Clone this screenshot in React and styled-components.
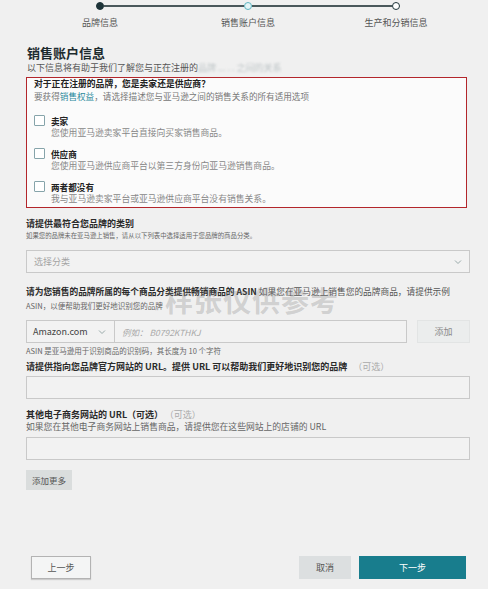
import React from 'react';
import styled, { createGlobalStyle } from 'styled-components';

const GlobalStyle = createGlobalStyle`
  html, body {
    margin: 0;
    padding: 0;
    background: #f0f0f0;
  }
  body {
    font-family: "Noto Sans CJK SC", "Noto Sans", "Liberation Sans", sans-serif;
    color: #333;
  }
  * { box-sizing: border-box; }
`;

const Page = styled.div`
  position: relative;
  width: 488px;
  height: 589px;
  padding: 1px 18px 0 26px;
  overflow: hidden;
`;

const Stepper = styled.div`
  display: flex;
  flex-direction: column;
`;

const Track = styled.div`
  display: flex;
  align-items: center;
  padding: 0 70px;
  height: 10px;
`;

const Dot = styled.span`
  width: 8px;
  height: 8px;
  border-radius: 50%;
  flex: none;
  border: 1.5px solid ${(p) => (p.$state === 'current' ? '#5fb5c1' : '#1d3338')};
  background: ${(p) => {
    if (p.$state === 'done') return '#1d3338';
    if (p.$state === 'current') return '#e4f4f6';
    return '#fff';
  }};
`;

const Line = styled.span`
  flex: 1;
  height: 1.5px;
  background: #4a585b;
`;

const StepLabels = styled.div`
  display: grid;
  grid-template-columns: repeat(3, 1fr);
  margin-top: 5px;
`;

const StepLabel = styled.span`
  text-align: center;
  font-size: 9px;
  color: #555;
  line-height: 14px;
`;

const Title = styled.h1`
  margin: 14px 0 0 1px;
  font-size: 13px;
  font-weight: 700;
  color: #1d2b2e;
  line-height: 18px;
`;

const Subtitle = styled.p`
  margin: 0 0 0 1px;
  font-size: 9px;
  color: #555;
  line-height: 12px;
`;

const Blur = styled.span`
  color: #bfc6c8;
  filter: blur(1px);
`;

const QuestionBox = styled.div`
  margin: 3px 3px 0 0;
  border: 1.5px solid #b3262b;
  background: #fbfbfb;
  padding: 0 7px 2px 7px;
`;

const QuestionTitle = styled.div`
  font-size: 8.8px;
  font-weight: 700;
  color: #222;
  line-height: 12px;
`;

const Hint = styled.div`
  font-size: 8.6px;
  color: #777;
  line-height: 12px;
`;

const Link = styled.span`
  color: #2a8a9c;
`;

const OptionList = styled.div`
  display: flex;
  flex-direction: column;
  gap: 9px;
  margin-top: 13px;
`;

const Option = styled.label`
  display: flex;
  gap: 6px;
  align-items: flex-start;
`;

const Box = styled.span`
  width: 11px;
  height: 11px;
  flex: none;
  border: 1px solid #86a4aa;
  background: #fff;
  border-radius: 1px;
`;

const OptionText = styled.div`
  display: flex;
  flex-direction: column;
`;

const OptionName = styled.span`
  font-size: 8.6px;
  font-weight: 700;
  color: #222;
  line-height: 12px;
`;

const OptionDesc = styled.span`
  font-size: 8.8px;
  color: #888;
  line-height: 12px;
`;

const Section = styled.div`
  margin-top: ${(p) => p.$top || 10}px;
`;

const Label = styled.div`
  font-size: ${(p) => p.$size || 9}px;
  font-weight: 700;
  color: #2a2a2a;
  line-height: 12px;
`;

const Normal = styled.span`
  font-weight: 400;
  color: #555;
`;

const Optional = styled.span`
  font-weight: 400;
  color: #aaa;
  margin-left: 6px;
`;

const Desc = styled.div`
  font-size: ${(p) => p.$size || 7}px;
  color: #666;
  line-height: ${(p) => p.$lh || 12}px;
`;

const Field = styled.div`
  height: 23px;
  border: 1px solid #c9c9c9;
  background: #f2f2f2;
  display: flex;
  align-items: center;
  padding: 0 7px;
  margin-top: ${(p) => p.$top || 0}px;
`;

const SelectField = styled(Field)`
  justify-content: space-between;
  font-size: 9px;
  color: #a4a4a4;
`;

const Chevron = () => (
  <svg width="8" height="6" viewBox="0 0 8 6">
    <path d="M1 1.5 L4 4.5 L7 1.5" fill="none" stroke="#9aa" strokeWidth="1" />
  </svg>
);

const AsinRow = styled.div`
  display: flex;
  gap: 10px;
  margin: 7px 0 2px;
`;

const AsinGroup = styled.div`
  flex: 1;
  display: flex;
  height: 23px;
  border: 1px solid #c9c9c9;
  background: #f2f2f2;
`;

const Market = styled.div`
  width: 88px;
  display: flex;
  align-items: center;
  justify-content: space-between;
  padding: 0 8px 0 6px;
  border-right: 1px solid #c9c9c9;
  font-size: 9px;
  color: #444;
`;

const Placeholder = styled.div`
  display: flex;
  align-items: center;
  padding: 0 7px;
  font-size: 8.5px;
  font-style: italic;
  color: #a8a8a8;
`;

const GhostButton = styled.button`
  width: 53px;
  height: 23px;
  border: 1px solid #e2e4e4;
  background: #ebeded;
  font-family: inherit;
  font-size: 9px;
  color: #8a8a8a;
  padding: 0;
`;

const SmallButton = styled.button`
  margin-top: 10px;
  height: 20px;
  padding: 0 6px;
  border: none;
  background: #dadddd;
  font-family: inherit;
  font-size: 8.5px;
  color: #555;
`;

const Footer = styled.div`
  display: flex;
  align-items: center;
  gap: 8px;
  margin-top: 66px;
  padding: 0 4px 0 5px;
`;

const Spacer = styled.div`
  flex: 1;
`;

const FooterButton = styled.button`
  height: 23px;
  width: ${(p) => p.$w}px;
  font-family: inherit;
  font-size: 9px;
  padding: 0;
  border: 1px solid ${(p) => (p.$variant === 'outline' ? '#b3b3b3' : 'transparent')};
  background: ${(p) => {
    if (p.$variant === 'primary') return '#187d8d';
    if (p.$variant === 'muted') return '#dcdfe0';
    return '#f4f5f5';
  }};
  color: ${(p) => (p.$variant === 'primary' ? '#fff' : '#555')};
  box-shadow: ${(p) => (p.$variant === 'outline' ? '0 1px 1px rgba(0,0,0,0.15)' : 'none')};
`;

const Watermark = styled.div`
  position: absolute;
  left: 165px;
  top: 280px;
  font-size: 28px;
  font-weight: 700;
  letter-spacing: 1px;
  color: rgba(130, 130, 130, 0.3);
  pointer-events: none;
`;

const options = [
  { name: '卖家', desc: '您使用亚马逊卖家平台直接向买家销售商品。' },
  { name: '供应商', desc: '您使用亚马逊供应商平台以第三方身份向亚马逊销售商品。' },
  { name: '两者都没有', desc: '我与亚马逊卖家平台或亚马逊供应商平台没有销售关系。' },
];

const App = () => (
  <>
    <GlobalStyle />
    <Page>
      <Stepper>
        <Track>
          <Dot $state="done" />
          <Line />
          <Dot $state="current" />
          <Line />
          <Dot $state="todo" />
        </Track>
        <StepLabels>
          <StepLabel>品牌信息</StepLabel>
          <StepLabel>销售账户信息</StepLabel>
          <StepLabel>生产和分销信息</StepLabel>
        </StepLabels>
      </Stepper>

      <Title>销售账户信息</Title>
      <Subtitle>
        以下信息将有助于我们了解您与正在注册的<Blur>品牌 ...  .  .</Blur> <Blur>之间的关系</Blur>
      </Subtitle>

      <QuestionBox>
        <QuestionTitle>对于正在注册的品牌，您是卖家还是供应商？</QuestionTitle>
        <Hint>
          要获得<Link>销售权益</Link>，请选择描述您与亚马逊之间的销售关系的所有适用选项
        </Hint>
        <OptionList>
          {options.map((o) => (
            <Option key={o.name}>
              <Box />
              <OptionText>
                <OptionName>{o.name}</OptionName>
                <OptionDesc>{o.desc}</OptionDesc>
              </OptionText>
            </Option>
          ))}
        </OptionList>
      </QuestionBox>

      <Section $top={10}>
        <Label>请提供最符合您品牌的类别</Label>
        <Desc $size={6.4}>如果您的品牌未在亚马逊上销售，请从以下列表中选择适用于您品牌的商品分类。</Desc>
        <SelectField $top={8}>
          <span>选择分类</span>
          <Chevron />
        </SelectField>
      </Section>

      <Section $top={13}>
        <Label $size={8.7}>
          请为您销售的品牌所属的每个商品分类提供畅销商品的 ASIN <Normal>如果您在亚马逊上销售您的品牌商品，请提供示例</Normal>
        </Label>
        <Desc $size={7.5} $lh={15}>ASIN，以便帮助我们更好地识别您的品牌</Desc>
        <AsinRow>
          <AsinGroup>
            <Market>
              <span>Amazon.com</span>
              <Chevron />
            </Market>
            <Placeholder>例如： B0792KTHKJ</Placeholder>
          </AsinGroup>
          <GhostButton>添加</GhostButton>
        </AsinRow>
        <Desc $size={7.5}>ASIN 是亚马逊用于识别商品的识别码，其长度为 10 个字符</Desc>
      </Section>

      <Section $top={4}>
        <Label>
          请提供指向您品牌官方网站的 URL。提供 URL 可以帮助我们更好地识别您的品牌<Optional>（可选）</Optional>
        </Label>
        <Field $top={3} />
      </Section>

      <Section $top={10}>
        <Label>
          其他电子商务网站的 URL（可选）<Optional>（可选）</Optional>
        </Label>
        <Desc $size={8.8}>如果您在其他电子商务网站上销售商品，请提供您在这些网站上的店铺的 URL</Desc>
        <Field $top={4} />
        <SmallButton>添加更多</SmallButton>
      </Section>

      <Footer>
        <FooterButton $variant="outline" $w={60}>上一步</FooterButton>
        <Spacer />
        <FooterButton $variant="muted" $w={52}>取消</FooterButton>
        <FooterButton $variant="primary" $w={107}>下一步</FooterButton>
      </Footer>

      <Watermark>样张仅供参考</Watermark>
    </Page>
  </>
);

export default App;
